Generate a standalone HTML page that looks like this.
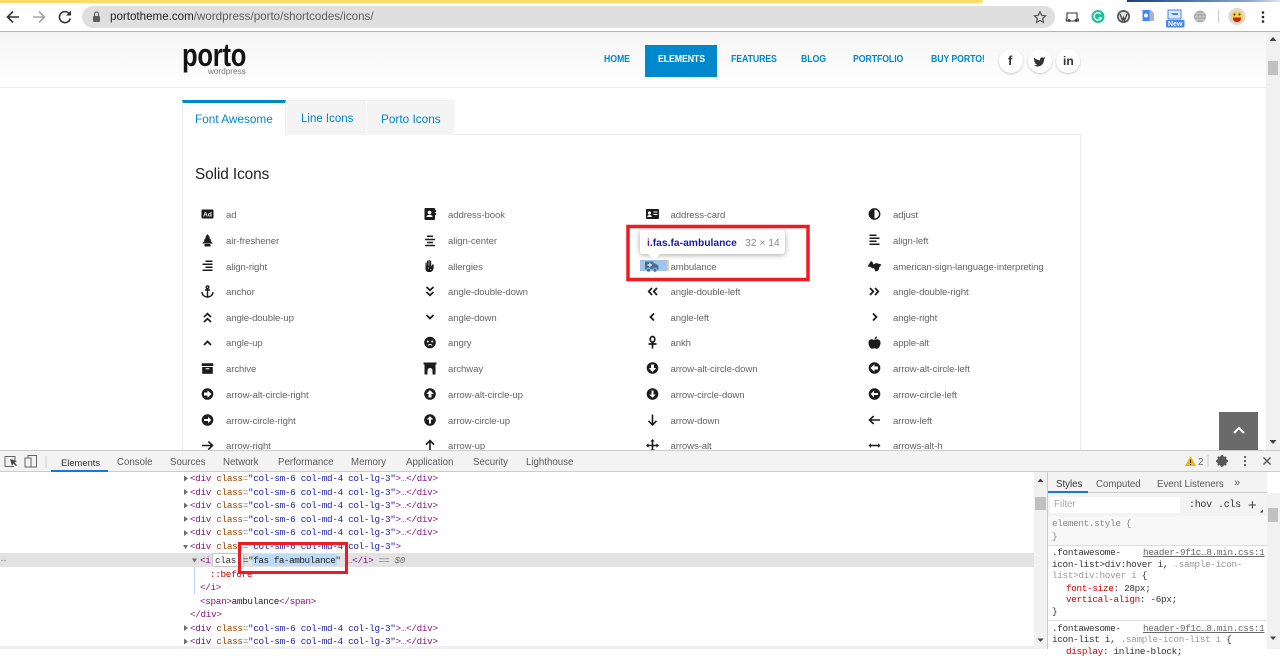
<!DOCTYPE html>
<html><head><meta charset="utf-8"><title>Icons</title>
<style>
html,body{margin:0;padding:0;width:1280px;height:649px;overflow:hidden;background:#fff;font-family:"Liberation Sans",sans-serif}
.a,.l,.n,.m,.s{position:absolute;white-space:nowrap}
.a{display:block}
.l{font-size:9.6px;letter-spacing:-.1px;line-height:14px;color:#666;margin-top:1px}
.n{font-size:10px;font-weight:bold;color:#0088cc;line-height:14px;top:53px;letter-spacing:-.1px;transform:scaleX(.875);transform-origin:0 50%}
.m{font-family:"Liberation Mono",monospace;font-size:9.3px;letter-spacing:-.31px;line-height:13px;color:#888;left:190px}
.m b{font-weight:normal;color:#881280}.m u{text-decoration:none;color:#994500}.m i{font-style:normal;color:#1a1aa6}
.s{font-family:"Liberation Mono",monospace;font-size:9.3px;letter-spacing:-.3px;line-height:12px;color:#333;left:1052px}
.t{font-size:9.7px;color:#5a5a5a;line-height:14px;top:456px}
</style></head><body>

<!-- browser chrome -->
<div class="a" style="left:0;top:0;width:1280px;height:32px;background:#fff;border-bottom:1px solid #b4b4b4;box-sizing:border-box"></div>
<div class="a" style="left:0;top:0;width:983px;height:2.5px;background:#fbdc68;border-radius:0 0 3px 0"></div>
<div class="a" style="left:1127px;top:0;width:153px;height:2px;background:linear-gradient(90deg,#15407c,#8aa6cf 80%,#dfe6f0)"></div>
<div class="a" style="left:82px;top:6px;width:973px;height:22px;background:#dfdfdf;border-radius:11px"></div>
<div class="a" style="left:110px;top:10px;font-size:11.6px;line-height:14px;color:#222">portotheme.com<span style="color:#5e5e5e">/wordpress/porto/shortcodes/icons/</span></div>

<!-- site header -->
<div class="a" style="left:0;top:32px;width:1266px;height:55px;background:linear-gradient(#f5f5f5,#fff);border-bottom:1px solid #ececec"></div>
<div class="a" style="left:182px;top:35px;font-size:32px;line-height:40px;font-weight:bold;letter-spacing:-.3px;color:#141414;transform:scaleX(.8);transform-origin:0 50%">porto</div>
<div class="a" style="left:208px;top:67px;font-size:8.2px;line-height:10px;color:#777">wordpress</div>
<div class="a" style="left:645px;top:45px;width:72px;height:32px;background:#0088cc"></div>
<span class="n" style="left:604px">HOME</span>
<span class="n" style="left:658px;color:#fff">ELEMENTS</span>
<span class="n" style="left:731px">FEATURES</span>
<span class="n" style="left:801px">BLOG</span>
<span class="n" style="left:853px">PORTFOLIO</span>
<span class="n" style="left:931px">BUY PORTO!</span>
<div class="a" style="left:999px;top:49px;width:24px;height:24px;border-radius:50%;background:#fff;box-shadow:0 1px 2px rgba(0,0,0,.22)"></div>
<div class="a" style="left:1028px;top:49px;width:24px;height:24px;border-radius:50%;background:#fff;box-shadow:0 1px 2px rgba(0,0,0,.22)"></div>
<div class="a" style="left:1056px;top:49px;width:24px;height:24px;border-radius:50%;background:#fff;box-shadow:0 1px 2px rgba(0,0,0,.22)"></div>
<span class="a" style="left:1008px;top:53px;font:bold 13px/16px 'Liberation Sans',sans-serif;color:#333">f</span>
<span class="a" style="left:1063px;top:54px;font:bold 12px/14px 'Liberation Sans',sans-serif;color:#333">in</span>

<!-- tabs -->
<div class="a" style="left:182px;top:134px;width:899px;height:330px;border:1px solid #ececec;box-sizing:border-box"></div>
<div class="a" style="left:182px;top:100px;width:104px;height:35px;background:#fff;border-top:3px solid #0088cc;border-left:1px solid #ececec;border-right:1px solid #ececec;box-sizing:border-box"></div>
<div class="a" style="left:287px;top:100px;width:79px;height:34px;background:#f4f4f4;border-top:1px solid #eee"></div>
<div class="a" style="left:367px;top:100px;width:87px;height:34px;background:#f4f4f4;border-top:1px solid #eee"></div>
<span class="a" style="left:195px;top:111.5px;font-size:11.8px;line-height:14px;color:#0088cc">Font Awesome</span>
<span class="a" style="left:301px;top:111.5px;font-size:11.5px;line-height:14px;color:#0088cc">Line Icons</span>
<span class="a" style="left:381px;top:111.5px;font-size:11.8px;line-height:14px;color:#0088cc">Porto Icons</span>
<span class="a" style="left:195px;top:165px;font-size:15.4px;line-height:20px;color:#222;letter-spacing:-.1px">Solid Icons</span>

<!-- icon labels -->
<span class="l" style="left:226px;top:208px">ad</span><span class="l" style="left:448px;top:208px">address-book</span><span class="l" style="left:670.5px;top:208px">address-card</span><span class="l" style="left:893px;top:208px">adjust</span>
<span class="l" style="left:226px;top:234px">air-freshener</span><span class="l" style="left:448px;top:234px">align-center</span><span class="l" style="left:893px;top:234px">align-left</span>
<span class="l" style="left:226px;top:260px">align-right</span><span class="l" style="left:448px;top:260px">allergies</span><span class="l" style="left:670.5px;top:260px">ambulance</span><span class="l" style="left:893px;top:260px">american-sign-language-interpreting</span>
<span class="l" style="left:226px;top:285px">anchor</span><span class="l" style="left:448px;top:285px">angle-double-down</span><span class="l" style="left:670.5px;top:285px">angle-double-left</span><span class="l" style="left:893px;top:285px">angle-double-right</span>
<span class="l" style="left:226px;top:311px">angle-double-up</span><span class="l" style="left:448px;top:311px">angle-down</span><span class="l" style="left:670.5px;top:311px">angle-left</span><span class="l" style="left:893px;top:311px">angle-right</span>
<span class="l" style="left:226px;top:336px">angle-up</span><span class="l" style="left:448px;top:336px">angry</span><span class="l" style="left:670.5px;top:336px">ankh</span><span class="l" style="left:893px;top:336px">apple-alt</span>
<span class="l" style="left:226px;top:362px">archive</span><span class="l" style="left:448px;top:362px">archway</span><span class="l" style="left:670.5px;top:362px">arrow-alt-circle-down</span><span class="l" style="left:893px;top:362px">arrow-alt-circle-left</span>
<span class="l" style="left:226px;top:388px">arrow-alt-circle-right</span><span class="l" style="left:448px;top:388px">arrow-alt-circle-up</span><span class="l" style="left:670.5px;top:388px">arrow-circle-down</span><span class="l" style="left:893px;top:388px">arrow-circle-left</span>
<span class="l" style="left:226px;top:414px">arrow-circle-right</span><span class="l" style="left:448px;top:414px">arrow-circle-up</span><span class="l" style="left:670.5px;top:414px">arrow-down</span><span class="l" style="left:893px;top:414px">arrow-left</span>
<span class="l" style="left:226px;top:439px">arrow-right</span><span class="l" style="left:448px;top:439px">arrow-up</span><span class="l" style="left:670.5px;top:439px">arrows-alt</span><span class="l" style="left:893px;top:439px">arrows-alt-h</span>

<!-- ambulance highlight -->
<div class="a" style="left:640px;top:260px;width:27px;height:11px;background:#9fc5e8"></div>
<div class="a" style="left:667px;top:260px;width:2px;height:11px;background:#f6c99b"></div>

<!-- scrollbar page -->
<div class="a" style="left:1266px;top:32px;width:14px;height:418px;background:#f1f1f1"></div>
<div class="a" style="left:1268px;top:61px;width:10px;height:14px;background:#c1c1c1"></div>
<div class="a" style="left:1219px;top:412px;width:39px;height:38px;background:#6a6a6a"></div>

<!-- devtools -->
<div class="a" style="left:0;top:450px;width:1280px;height:22px;background:#f3f3f3;border-top:1px solid #ccc;border-bottom:1px solid #ccc;box-sizing:border-box"></div>
<div class="a" style="left:51px;top:470px;width:57px;height:2px;background:#1a73e8"></div>
<span class="a t" style="left:61px;color:#333;font-size:9.4px">Elements</span>
<span class="a t" style="left:117px">Console</span>
<span class="a t" style="left:170px">Sources</span>
<span class="a t" style="left:223px">Network</span>
<span class="a t" style="left:278px">Performance</span>
<span class="a t" style="left:351px">Memory</span>
<span class="a t" style="left:406px">Application</span>
<span class="a t" style="left:473px">Security</span>
<span class="a t" style="left:526px">Lighthouse</span>
<span class="a t" style="left:1198px;color:#666">2</span>

<!-- selected row -->
<div class="a" style="left:0;top:553px;width:1034px;height:14px;background:#e2e2e2"></div>
<div class="a" style="left:252px;top:554px;width:85px;height:12px;background:#bcdcf6"></div>
<div class="a" style="left:213px;top:554px;width:30px;height:12px;background:#fff;box-shadow:0 0 2px rgba(0,0,0,.4)"></div>
<div class="a" style="left:194px;top:567px;width:1px;height:27px;background:#b6d4f2"></div>

<div class="m" style="top:472px"><b>&lt;div</b> <u>class</u>=<i>"col-sm-6 col-md-4 col-lg-3"</i><b>&gt;</b>…<b>&lt;/div&gt;</b></div>
<div class="m" style="top:485.5px"><b>&lt;div</b> <u>class</u>=<i>"col-sm-6 col-md-4 col-lg-3"</i><b>&gt;</b>…<b>&lt;/div&gt;</b></div>
<div class="m" style="top:499px"><b>&lt;div</b> <u>class</u>=<i>"col-sm-6 col-md-4 col-lg-3"</i><b>&gt;</b>…<b>&lt;/div&gt;</b></div>
<div class="m" style="top:512.5px"><b>&lt;div</b> <u>class</u>=<i>"col-sm-6 col-md-4 col-lg-3"</i><b>&gt;</b>…<b>&lt;/div&gt;</b></div>
<div class="m" style="top:526px"><b>&lt;div</b> <u>class</u>=<i>"col-sm-6 col-md-4 col-lg-3"</i><b>&gt;</b>…<b>&lt;/div&gt;</b></div>
<div class="m" style="top:540px"><b>&lt;div</b> <u>class</u>=<i>"col-sm-6 col-md-4 col-lg-3"</i><b>&gt;</b></div>
<div class="m" style="top:553.5px;left:200px"><b>&lt;i</b></div>
<div class="m" style="top:553.5px;left:215px;color:#333">clas</div>
<div class="m" style="top:553.5px;left:243px;color:#333;letter-spacing:-.45px">="<span style="color:#222">fas fa-ambulance</span>"</div>
<div class="m" style="top:553.5px;left:347px">…<b>&lt;/i&gt;</b> <span style="font-style:italic;color:#777">== $0</span></div>
<div class="m" style="top:567.5px;left:210px;color:#c80000">::before</div>
<div class="m" style="top:581px;left:200px"><b>&lt;/i&gt;</b></div>
<div class="m" style="top:594.5px;left:200px"><b>&lt;span&gt;</b><span style="color:#222">ambulance</span><b>&lt;/span&gt;</b></div>
<div class="m" style="top:608px"><b>&lt;/div&gt;</b></div>
<div class="m" style="top:621.5px"><b>&lt;div</b> <u>class</u>=<i>"col-sm-6 col-md-4 col-lg-3"</i><b>&gt;</b>…<b>&lt;/div&gt;</b></div>
<div class="m" style="top:635px"><b>&lt;div</b> <u>class</u>=<i>"col-sm-6 col-md-4 col-lg-3"</i><b>&gt;</b>…<b>&lt;/div&gt;</b></div>
<div class="a" style="left:0;top:646px;width:1047px;height:3px;background:#f0f0f0"></div>

<!-- sidebar -->
<div class="a" style="left:1034px;top:472px;width:14px;height:177px;background:#f1f1f1;border-right:1px solid #ccc;box-sizing:border-box"></div>
<div class="a" style="left:1035px;top:497px;width:11px;height:13px;background:#c1c1c1"></div>
<div class="a" style="left:1048px;top:472px;width:219px;height:21px;background:#f3f3f3;border-bottom:1px solid #ccc;box-sizing:border-box"></div>
<div class="a" style="left:1048px;top:491px;width:40px;height:2px;background:#1a73e8"></div>
<span class="a t" style="left:1056px;top:477.5px;color:#333">Styles</span>
<span class="a t" style="left:1096px;top:477.5px">Computed</span>
<span class="a t" style="left:1157px;top:477.5px">Event Listeners</span>
<span class="a t" style="left:1234px;top:475.5px;font-size:11px">»</span>
<div class="a" style="left:1048px;top:493px;width:219px;height:23px;background:#f3f3f3"></div>
<div class="a" style="left:1050px;top:497px;width:130px;height:16px;background:#fff"></div>
<span class="a" style="left:1054px;top:498px;font-size:9.8px;line-height:14px;color:#aaa">Filter</span>
<span class="s" style="left:1189px;top:500px;color:#333;font-size:10px">:hov</span>
<span class="s" style="left:1218px;top:500px;color:#333;font-size:10px">.cls</span>
<span class="a" style="left:1248px;top:498px;font-size:15px;line-height:16px;color:#444">+</span>
<div class="a" style="left:1048px;top:516px;width:219px;height:29px;background:#f8f8f8"></div>
<div class="s" style="top:518px;color:#888">element.style {</div>
<div class="s" style="top:531px;color:#888">}</div>
<div class="a" style="left:1048px;top:545px;width:219px;height:1px;background:#ddd"></div>
<div class="s" style="top:547px">.fontawesome-<span style="position:absolute;left:91px;color:#666;text-decoration:underline">header-9f1c…8.min.css:1</span></div>
<div class="s" style="top:558.5px">icon-list&gt;div:hover i, <span style="color:#999">.sample-icon-</span></div>
<div class="s" style="top:570px"><span style="color:#999">list&gt;div:hover i</span> {</div>
<div class="s" style="top:583px;left:1066px"><span style="color:#c80000">font-size</span>: 28px;</div>
<div class="s" style="top:594px;left:1066px"><span style="color:#c80000">vertical-align</span>: -6px;</div>
<div class="s" style="top:606px">}</div>
<div class="a" style="left:1048px;top:620px;width:219px;height:1px;background:#ddd"></div>
<div class="s" style="top:622.5px">.fontawesome-<span style="position:absolute;left:91px;color:#666;text-decoration:underline">header-9f1c…8.min.css:1</span></div>
<div class="s" style="top:634px">icon-list i, <span style="color:#999">.sample-icon-list i</span> {</div>
<div class="s" style="top:646px;left:1066px"><span style="color:#c80000">display</span>: inline-block;</div>
<div class="a" style="left:1267px;top:493px;width:13px;height:156px;background:#f1f1f1"></div>
<div class="a" style="left:1268px;top:508px;width:10px;height:14px;background:#c1c1c1"></div>

<!-- icon layer -->
<svg width="1280" height="649" viewBox="0 0 1280 649" style="position:absolute;left:0;top:0" fill="#1c1c1c" stroke="none">
<defs><clipPath id="c"><rect x="0" y="32" width="1266" height="418"/></clipPath></defs>

<!-- chrome toolbar -->
<g fill="none" stroke="#333" stroke-width="1.6">
<path d="M19 17H8M13 11.500L7.500 17l5.500 5.500"/>
<path d="M33 17h11M39 11.500l5.500 5.500-5.500 5.500" stroke="#a5a5a5"/>
<path d="M69.500 14a5.500 5.500 0 1 0 .8 4.500"/>
</g>
<path d="M71 10.500v5h-5z" fill="#333"/>
<rect x="93" y="16" width="7" height="6" rx="1" fill="#5b5b5b"/><path d="M94.500 16v-2a2 2 0 0 1 4 0v2" fill="none" stroke="#5b5b5b" stroke-width="1.100"/>
<path d="M1040 11.700l1.700 3.600 3.900.5-2.900 2.700.8 3.900-3.500-2-3.500 2 .8-3.900-2.900-2.700 3.900-.5z" fill="none" stroke="#555" stroke-width="1.200"/>
<path d="M1067 13h10v6h1.300v2h-12v-2h.7z" fill="#fff" stroke="#333" stroke-width="1.100"/><circle cx="1069" cy="20.500" r="1.400" fill="#333"/><circle cx="1076" cy="20.500" r="1.400" fill="#333"/>
<circle cx="1098" cy="16.500" r="6.500" fill="#15c39a"/><path d="M1100.800 14.200a3.700 3.700 0 1 0 .5 3.500h-3" fill="none" stroke="#fff" stroke-width="1.400"/>
<circle cx="1123.500" cy="16.500" r="6.500" fill="#555"/><circle cx="1123.500" cy="16.500" r="4.800" fill="#e4e4e4"/><path d="M1120 14l2.500 6.500 1-3 1 3 2.500-6.500" fill="none" stroke="#444" stroke-width="1.300"/>
<path d="M1143 10h8l3 3v8h-5l-6-1z" fill="#aab4c4"/><path d="M1142.500 10h7v11h-7z" fill="#4285f4"/><circle cx="1146" cy="15.500" r="2" fill="#fff"/>
<rect x="1168" y="10" width="13" height="9" fill="#dbe8fa" stroke="#4a86e8"/><path d="M1171 13h7v2h-5z" fill="#4a86e8"/>
<rect x="1166" y="20" width="18.500" height="7.500" rx="1" fill="#4a86e8"/>
<text x="1175.200" y="26.200" font-family="Liberation Sans" font-size="7" font-weight="bold" fill="#fff" text-anchor="middle">New</text>
<circle cx="1200" cy="16.500" r="6" fill="#a9a9a9"/><path d="M1194 16.500h12M1200 10.500v12M1195 13.500h10M1195 19.500h10M1197 11v11M1203 11v11" stroke="#d5d5d5" stroke-width=".6"/>
<rect x="1218" y="10" width="1" height="13" fill="#ccc"/>
<circle cx="1237" cy="16.500" r="8.700" fill="#dcdcdc"/><circle cx="1237" cy="16.500" r="6" fill="#f8d24c"/><path d="M1233 17.500h8c0 4-2 4.500-4 4.500s-4-.5-4-4.500z" fill="#c22"/><circle cx="1234.500" cy="14.500" r="1" fill="#333"/><circle cx="1239.500" cy="14.500" r="1" fill="#333"/>
<circle cx="1263" cy="12.500" r="1.300" fill="#222"/><circle cx="1263" cy="17" r="1.300" fill="#222"/><circle cx="1263" cy="21.500" r="1.300" fill="#222"/>
<path d="M1273 37l-3.500 4h7z" fill="#444"/>

<!-- twitter -->
<path d="M1034 57.500c2 1.800 4 2.800 6 2.800-.3-2 1.600-3.600 3.300-2.600l1.700-.7-1 1.500 1.200-.2-1.200 1.200c.2 4-2.700 7-6.500 7-1.500 0-2.700-.4-3.700-1 1.300.1 2.500-.2 3.400-1-1.200-.1-2-.7-2.300-1.700h1c-1.200-.4-1.900-1.300-1.900-2.500l1 .3c-1.100-.8-1.400-2.100-.5-3.100z" fill="#333"/>
<path d="M1234 433l5-5 5 5" fill="none" stroke="#fff" stroke-width="2.200"/>
<path d="M1273 444l-3.500-4h7z" fill="#444"/>

<!-- devtools toolbar icons -->
<g fill="none" stroke="#666" stroke-width="1">
<path d="M14 466.500H5v-10h10v6"/><path d="M10 459l2 7 1.300-2.600 2.700 2.700 1-1-2.700-2.700 2.500-1.300z" fill="#444" stroke="none"/>
<rect x="25" y="458" width="6" height="9"/><path d="M28 458v-2.500h8.500v11.500H31"/>
<path d="M46 456v12" stroke="#ccc"/>
</g>
<path d="M1190.500 456l5.500 10h-11z" fill="#f4b400"/><rect x="1190" y="459.500" width="1" height="3.500" fill="#333"/><rect x="1190" y="464" width="1" height="1" fill="#333"/>
<rect x="1207.500" y="455" width="1" height="12" fill="#ccc"/>
<circle cx="1222" cy="461" r="3.800" fill="none" stroke="#555" stroke-width="2.400"/><path d="M1222 455v12M1216 461h12M1217.800 456.800l8.400 8.400M1226.200 456.800l-8.400 8.400" stroke="#555" stroke-width="1.700"/>
<circle cx="1245" cy="457" r="1.100" fill="#555"/><circle cx="1245" cy="461" r="1.100" fill="#555"/><circle cx="1245" cy="465" r="1.100" fill="#555"/>
<path d="M1263.500 457.500l7 7M1270.500 457.500l-7 7" stroke="#555" stroke-width="1.400"/>
<path d="M1040.500 478.500l-3 3.500h6z" fill="#444"/><path d="M1040.500 642l-3-3.500h6z" fill="#444"/>
<path d="M1273 640l-3-3.500h6z" fill="#444"/>
<path d="M1263 509.500v3h-3z" fill="#444"/>

<!-- dom tree arrows -->
<g fill="#6e6e6e">
<path d="M184 475.500l4 3-4 3zM184 489l4 3-4 3zM184 502.500l4 3-4 3zM184 516l4 3-4 3zM184 530l4 3-4 3zM184 625l4 3-4 3zM184 638.500l4 3-4 3z"/>
<path d="M183 545l5 0-2.500 4zM192 558.500l5 0-2.500 4z"/>
</g>
<g fill="#888"><circle cx="2" cy="560.500" r=".7"/><circle cx="5" cy="560.500" r=".7"/></g>

<g clip-path="url(#c)">
<!-- row 1 -->
<g transform="translate(207.500,214)"><rect x="-6" y="-4.500" width="12" height="9" rx="1"/><text x="0" y="2.600" font-family="Liberation Sans" font-size="6.500" font-weight="bold" fill="#fff" text-anchor="middle">Ad</text></g>
<g transform="translate(430,214)"><rect x="-5.500" y="-6" width="10.500" height="12" rx="1"/><circle cx="-.5" cy="-1.500" r="1.800" fill="#fff"/><path d="M-3.500 3c0-3 6-3 6 0z" fill="#fff"/><rect x="5" y="-4" width="1" height="2"/><rect x="5" y="-1" width="1" height="2"/></g>
<g transform="translate(652.500,214)"><rect x="-6.500" y="-5" width="13" height="10" rx="1"/><circle cx="-3" cy="-1" r="1.600" fill="#fff"/><path d="M-5.300 3c0-2.600 4.600-2.600 4.600 0z" fill="#fff"/><rect x="1" y="-2.500" width="4" height="1" fill="#fff"/><rect x="1" y="0" width="4" height="1" fill="#fff"/></g>
<g transform="translate(874.500,214)"><circle r="5.200" fill="none" stroke="#1c1c1c" stroke-width="1.400"/><path d="M0-5.500a5.500 5.500 0 0 0 0 11z"/></g>
<!-- row 2 -->
<g transform="translate(207.500,240.500)"><path d="M0-6.500l2.500 3.500-1 0 2.500 3-1.200 0 2.500 3H-5.200l2.500-3H-3.900l2.500-3-1 0z"/><rect x="-3" y="3.500" width="6" height="2.500"/></g>
<g transform="translate(430,240.500)"><path d="M-3-5h6v1.500h-6zM-5-1.800h10v1.500h-10zM-3 1.300h6v1.500h-6zM-5 4.300h10v1.500h-10z"/></g>
<g transform="translate(874.500,240)"><path d="M-5-5.500h7v1.500h-7zM-5-2.500h10v1.500h-10zM-5 .5h7v1.500h-7zM-5 3.500h10v1.500h-10z"/></g>
<!-- row 3 -->
<g transform="translate(207.500,266)"><path d="M-2-5.500h7v1.500h-7zM-5-2.500h10v1.500h-10zM-2 .5h7v1.500h-7zM-5 3.500h10v1.500h-10z"/></g>
<g transform="translate(430,266)"><path d="M-4.500 3v-6.500h1.200V-.5h.3V-5.200h1.200V-.5h.3V-6h1.200v5.500h.3V-5.200h1.200V.5l1.300-2c.7-.7 1.500-.1 1.200.7L3.500 3C2.800 5 1.500 6 0 6h-1.500c-1.800 0-3-1.300-3-3z"/><circle cx="-1.500" cy="2" r=".5" fill="#fff"/><circle cx=".8" cy="3.200" r=".5" fill="#fff"/></g>
<g transform="translate(652,266)"><path d="M-7-4.500h8.500v2h2l3 2.500v3.500h-13.500z" fill="#4a6f96"/><path d="M-4.500-1.700h1.500v-1.500h1.500v1.500H0v1.400h-1.500V1.200H-3V-.3h-1.500z" fill="#d8e6f4"/><circle cx="-3.500" cy="4" r="1.900" fill="#4a6f96" stroke="#9fc5e8" stroke-width=".7"/><circle cx="3" cy="4" r="1.900" fill="#4a6f96" stroke="#9fc5e8" stroke-width=".7"/></g>
<g transform="translate(874.500,266)"><path d="M-7 .5L-3.500-5l1.500 1 1 2.500 2.500-1.500L7-1.500 5 1 4 4.500 1 5.500-.5 2l-2 .5-1-1.500z"/></g>
<!-- row 4 -->
<g transform="translate(207.500,291.500)" fill="none" stroke="#1c1c1c" stroke-width="1.400"><circle cy="-4.300" r="1.300"/><path d="M0-3v9M-2.500-1.500h5M-5.500 0.500c0 3 2.500 5 5.500 5s5.500-2 5.500-5"/></g>
<g transform="translate(430,291.500)" fill="none" stroke="#1c1c1c" stroke-width="1.700"><path d="M-3.500-4.500L0-1.200 3.500-4.500M-3.500 .5L0 3.800 3.500 .5"/></g>
<g transform="translate(652.500,291.500)" fill="none" stroke="#1c1c1c" stroke-width="1.700"><path d="M-.5-3.500L-3.800 0l3.300 3.500M4.500-3.500L1.200 0l3.300 3.500"/></g>
<g transform="translate(874.500,291.500)" fill="none" stroke="#1c1c1c" stroke-width="1.700"><path d="M-4.500-3.500L-1.200 0l-3.300 3.500M.5-3.500L3.800 0 .5 3.500"/></g>
<!-- row 5 -->
<g transform="translate(207.500,317.500)" fill="none" stroke="#1c1c1c" stroke-width="1.700"><path d="M-3.500-.5L0-3.800 3.500-.5M-3.500 4.500L0 1.200 3.500 4.500"/></g>
<g transform="translate(430,316.500)" fill="none" stroke="#1c1c1c" stroke-width="1.800"><path d="M-3.500-1.500L0 2 3.500-1.500"/></g>
<g transform="translate(652.500,317)" fill="none" stroke="#1c1c1c" stroke-width="1.800"><path d="M1.500-3.500L-2 0l3.500 3.500"/></g>
<g transform="translate(874.500,317)" fill="none" stroke="#1c1c1c" stroke-width="1.800"><path d="M-1.500-3.500L2 0l-3.500 3.500"/></g>
<!-- row 6 -->
<g transform="translate(207.500,343.500)" fill="none" stroke="#1c1c1c" stroke-width="1.800"><path d="M-3.500 1.500L0-2 3.500 1.500"/></g>
<g transform="translate(430,342.500)"><circle r="5.800"/><circle cx="-2.200" cy="-1" r="1" fill="#fff"/><circle cx="2.200" cy="-1" r="1" fill="#fff"/><path d="M-2 3c1-1.500 3-1.500 4 0" fill="none" stroke="#fff" stroke-width="1"/></g>
<g transform="translate(652.500,342.500)" fill="none" stroke="#1c1c1c" stroke-width="1.700"><ellipse cy="-3.200" rx="2.300" ry="2.800"/><path d="M0 0v6M-4 1.500h8"/></g>
<g transform="translate(874.500,342.500)"><path d="M-1-2.800c-3-1.200-5 .5-5 3 0 3 2 6 3.500 6 .8 0 1.500-.4 2.500-.4s1.700.4 2.500.4C4 6.200 6 3.200 6 .2c0-2.500-2-4.200-5-3z"/><path d="M0-3c0-1.500 1-3 2.500-3 0 1.500-1 3-2.500 3z"/></g>
<!-- row 7 -->
<g transform="translate(207.500,368.500)"><rect x="-5.800" y="-5.300" width="11.600" height="2.800" rx=".6"/><path d="M-5.300-1.500h10.600v6.800h-10.600z"/><rect x="-1.800" y="-.3" width="3.600" height="1.100" fill="#fff"/></g>
<g transform="translate(430,368.500)"><path d="M-6.500-6h13v2h-1v10H2.500V2a2.500 2.500 0 0 0-5 0v4h-3V-4h-1z"/></g>
<g transform="translate(652.500,368)"><circle r="5.800"/><path d="M-1.500-3.500h3V0h2.300L0 4-3.800 0h2.300z" fill="#fff"/></g>
<g transform="translate(874.500,368)"><circle r="5.800"/><path d="M3.500-1.500V1.500H0v2.300L-4 0 0-3.800v2.300z" fill="#fff"/></g>
<!-- row 8 -->
<g transform="translate(207.500,394)"><circle r="5.800"/><path d="M-3.500-1.500V1.500H0v2.300L4 0 0-3.800v2.300z" fill="#fff"/></g>
<g transform="translate(430,394)"><circle r="5.800"/><path d="M-1.500 3.500h3V0h2.300L0-4-3.800 0h2.300z" fill="#fff"/></g>
<g transform="translate(652.500,394)"><circle r="5.800"/><path d="M-1 -3.500h2V.5h2.200L0 3.800-3.200 .5H-1z" fill="#fff"/></g>
<g transform="translate(874.500,394)"><circle r="5.800"/><path d="M3.500-1V1H-.5v2.200L-3.800 0-.5-3.200V-1z" fill="#fff"/></g>
<!-- row 9 -->
<g transform="translate(207.500,420)"><circle r="5.800"/><path d="M-3.500-1V1H.5v2.200L3.800 0 .5-3.200V-1z" fill="#fff"/></g>
<g transform="translate(430,420)"><circle r="5.800"/><path d="M-1 3.500h2V-.5h2.200L0-3.800-3.200-.5H-1z" fill="#fff"/></g>
<g transform="translate(652.500,420)" fill="none" stroke="#1c1c1c" stroke-width="1.600"><path d="M0-5.500v10M-4 .8L0 5 4 .8"/></g>
<g transform="translate(874.500,420)" fill="none" stroke="#1c1c1c" stroke-width="1.600"><path d="M5.500 0h-10M-.8-4L-5 0l4.200 4"/></g>
<!-- row 10 -->
<g transform="translate(207.500,445.500)" fill="none" stroke="#1c1c1c" stroke-width="1.600"><path d="M-5.500 0h10M.8-4L5 0 .8 4"/></g>
<g transform="translate(430,445.500)" fill="none" stroke="#1c1c1c" stroke-width="1.600"><path d="M0 5.500v-10M-4-.8L0-5l4 4.200"/></g>
<g transform="translate(652.500,445.500)"><path d="M0-6.500L2.200-4H.8v3.200H4V-2.200L6.500 0 4 2.200V.8H.8V4h1.400L0 6.500-2.200 4H-.8V.8H-4v1.400L-6.500 0-4-2.200V-.8H-.8V-4h-1.400z"/></g>
<g transform="translate(874.500,445.500)"><path d="M-6 0l2.500-2.400v1.600h7v-1.600L6 0 3.500 2.400V.8h-7v1.600z"/></g>
</g>

<!-- tooltip -->
<g>
<rect x="640" y="230" width="145" height="24" rx="3" fill="#fff" style="filter:drop-shadow(0 1px 3px rgba(0,0,0,.35))"/>
<path d="M648 254h12l-6 6z" fill="#fff"/>
<text x="647" y="246" font-family="Liberation Sans" font-size="10.300" font-weight="bold" fill="#1a1aa6"><tspan fill="#881280">i</tspan>.fas.fa-ambulance</text>
<text x="745" y="246" font-family="Liberation Sans" font-size="10.300" fill="#888">32 × 14</text>
</g>

<!-- red annotation boxes -->
<rect x="628" y="226.500" width="180" height="53" fill="none" stroke="#ed1c24" stroke-width="3.500"/>
<rect x="239.500" y="543.500" width="107" height="29" fill="none" stroke="#ed1c24" stroke-width="3"/>
</svg>
</body></html>
